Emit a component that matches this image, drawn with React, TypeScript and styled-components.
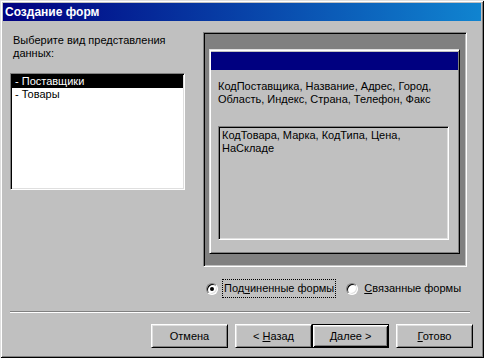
import React from "react";
import styled, { createGlobalStyle } from "styled-components";

const GlobalStyle = createGlobalStyle`
  html, body {
    margin: 0;
    padding: 0;
    background: #c0c0c0;
  }
  body {
    font-family: "Liberation Sans", Arial, sans-serif;
    font-size: 11px;
    line-height: 13px;
    color: #000;
  }
`;

const Window = styled.div`
  width: 484px;
  height: 358px;
  box-sizing: border-box;
  padding: 3px;
  background: #c0c0c0;
  box-shadow: inset 1px 1px #dfdfdf, inset -1px -1px #000, inset 2px 2px #fff,
    inset -2px -2px #808080;
  display: flex;
  flex-direction: column;
`;

const TitleBar = styled.div`
  height: 18px;
  padding-left: 2px;
  background: linear-gradient(to right, #000080, #1084d0);
  color: #fff;
  font-weight: bold;
  font-size: 12px;
  line-height: 18px;
`;

const Main = styled.div`
  display: grid;
  grid-template-columns: 175px 264px;
  column-gap: 18px;
  margin: 11px 0 0 7px;
`;

const LeftCol = styled.div`
  display: flex;
  flex-direction: column;
`;

const Prompt = styled.div`
  padding: 2px 0 0 3px;
`;

const ListBox = styled.div`
  margin-top: 13px;
  height: 117px;
  box-sizing: border-box;
  background: #fff;
  border: 1px solid;
  border-color: #808080 #fff #fff #808080;
  box-shadow: inset 1px 1px #000, inset -1px -1px #dfdfdf;
  padding: 1px;
`;

const ListItem = styled.div<{ $selected?: boolean }>`
  height: 13px;
  padding-left: 3px;
  background: ${(p) => (p.$selected ? "#000" : "transparent")};
  color: ${(p) => (p.$selected ? "#fff" : "#000")};
  white-space: nowrap;
`;

const RightCol = styled.div`
  display: flex;
  flex-direction: column;
`;

const Preview = styled.div`
  height: 235px;
  box-sizing: border-box;
  background: #808080;
  border: 1px solid;
  border-color: #808080 #fff #fff #808080;
  box-shadow: inset 1px 1px #000, inset -1px -1px #c0c0c0;
  padding: 16px 6px 12px 5px;
  display: flex;
`;

const MiniForm = styled.div`
  flex: 1;
  box-sizing: border-box;
  background: #c0c0c0;
  border: 1px solid;
  border-color: #dfdfdf #000 #000 #dfdfdf;
  box-shadow: inset 1px 1px #fff, inset -1px -1px #808080;
  padding: 2px 1px 0 1px;
  display: flex;
  flex-direction: column;
`;

const MiniTitle = styled.div`
  height: 18px;
  background: #000080;
`;

const Fields = styled.div`
  margin: 10px 0 0 7px;
`;

const SubForm = styled.div`
  margin: 20px 9px 0 7px;
  height: 114px;
  box-sizing: border-box;
  border: 1px solid;
  border-color: #808080 #fff #fff #808080;
  box-shadow: inset 1px 1px #000, inset -1px -1px #dfdfdf;
  padding: 2px 2px 0 3px;
`;

const RadioRow = styled.div`
  display: flex;
  align-items: center;
  margin: 12px 0 0 3px;
`;

const RadioOption = styled.label`
  display: flex;
  align-items: center;
  gap: 4px;
  margin-right: 10px;
`;

const RadioCircle = styled.span<{ $checked?: boolean }>`
  position: relative;
  width: 12px;
  height: 12px;
  box-sizing: border-box;
  border-radius: 50%;
  background: #fff;
  border: 1px solid;
  border-color: #808080 #fff #fff #808080;
  box-shadow: inset 1px 1px #000, inset -1px -1px #dfdfdf;

  &::after {
    content: "";
    display: ${(p) => (p.$checked ? "block" : "none")};
    position: absolute;
    left: 3px;
    top: 3px;
    width: 4px;
    height: 4px;
    border-radius: 50%;
    background: #000;
  }
`;

const RadioLabel = styled.span<{ $focused?: boolean }>`
  padding: 2px 1px;
  border: 1px dotted ${(p) => (p.$focused ? "#000" : "transparent")};
  white-space: nowrap;
`;

const Key = styled.span`
  text-decoration: underline;
`;

const Separator = styled.div`
  margin: 13px 11px 0 7px;
  height: 1px;
  border-top: 1px solid #808080;
  border-bottom: 1px solid #fff;
  height: 0;
`;

const ButtonRow = styled.div`
  display: flex;
  justify-content: flex-end;
  margin: 11px 8px 0 0;
`;

const Button = styled.button<{ $default?: boolean; $gapLeft?: number }>`
  width: 77px;
  height: 24px;
  margin-left: ${(p) => p.$gapLeft ?? 0}px;
  box-sizing: border-box;
  font-family: "Liberation Sans", Arial, sans-serif;
  font-size: 11px;
  color: #000;
  background: #c0c0c0;
  border: 1px solid;
  border-color: ${(p) => (p.$default ? "#000" : "#fff #000 #000 #fff")};
  box-shadow: ${(p) =>
    p.$default
      ? "inset 1px 1px #fff, inset -1px -1px #000, inset 2px 2px #dfdfdf, inset -2px -2px #808080"
      : "inset 1px 1px #dfdfdf, inset -1px -1px #808080"};
  padding: 0;
`;

export default function App() {
  return (
    <>
      <GlobalStyle />
      <Window>
        <TitleBar>Создание форм</TitleBar>
        <Main>
          <LeftCol>
            <Prompt>
              Выберите вид представления
              <br />
              данных:
            </Prompt>
            <ListBox>
              <ListItem $selected>- Поставщики</ListItem>
              <ListItem>- Товары</ListItem>
            </ListBox>
          </LeftCol>
          <RightCol>
            <Preview>
              <MiniForm>
                <MiniTitle />
                <Fields>
                  КодПоставщика, Название, Адрес, Город,
                  <br />
                  Область, Индекс, Страна, Телефон, Факс
                </Fields>
                <SubForm>
                  КодТовара, Марка, КодТипа, Цена,
                  <br />
                  НаСкладе
                </SubForm>
              </MiniForm>
            </Preview>
            <RadioRow>
              <RadioOption>
                <RadioCircle $checked />
                <RadioLabel $focused>
                  Под<Key>ч</Key>иненные формы
                </RadioLabel>
              </RadioOption>
              <RadioOption>
                <RadioCircle />
                <RadioLabel>
                  <Key>С</Key>вязанные формы
                </RadioLabel>
              </RadioOption>
            </RadioRow>
          </RightCol>
        </Main>
        <Separator />
        <ButtonRow>
          <Button>Отмена</Button>
          <Button $gapLeft={7}>
            &lt; <Key>Н</Key>азад
          </Button>
          <Button $default>
            <Key>Д</Key>алее &gt;
          </Button>
          <Button $gapLeft={7}>
            <Key>Г</Key>отово
          </Button>
        </ButtonRow>
      </Window>
    </>
  );
}
